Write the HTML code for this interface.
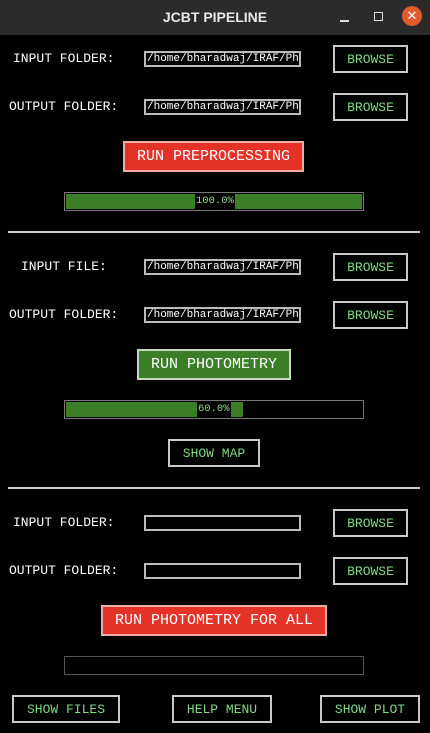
<!DOCTYPE html>
<html><head><meta charset="utf-8"><style>
*{margin:0;padding:0;box-sizing:border-box}
body{width:430px;height:733px;background:#000;position:relative;overflow:hidden;font-family:"Liberation Mono",monospace;color:#fff}
.a{position:absolute}
.tb{left:0;top:0;width:430px;height:35px;background:#2b2b2b}
.title{left:0;width:430px;top:9px;text-align:center;font:bold 14px "Liberation Sans",sans-serif;color:#e8e8e8}
.lbl{font-size:13px;line-height:14px;white-space:pre}
.ent{width:157px;height:16px;border:2px solid #bbb;font-size:11px;line-height:12px;color:#fff;overflow:hidden;white-space:nowrap;padding-left:1px}
.btn{border:2px solid #c8c8c8;color:#80d880;font-size:13px;display:flex;align-items:center;justify-content:center;background:#000}
.big{border:2px solid #e8b0a8;color:#fff;font-size:15px;display:flex;align-items:center;justify-content:center}
.red{background:#e53228}
.grn{background:#3a7e28;border-color:#c8d8c0}
.pb{left:64px;width:300px;height:19px;border:1px solid #777}
.fill{position:absolute;left:1px;top:1px;bottom:1px;background:#3a7e28}
.pt{position:absolute;top:1px;height:15px;background:#000;color:#8ee08e;font-size:10.5px;line-height:15px;padding:0 1px}
.sep{left:8px;width:412px;height:2px;background:#ccc}
</style></head><body>
<div class="a tb"></div>
<div class="a title">JCBT PIPELINE</div>
<div class="a" style="left:340px;top:20px;width:9px;height:1.5px;background:#ddd"></div>
<div class="a" style="left:374px;top:12px;width:9px;height:9px;border:1.5px solid #ddd"></div>
<div class="a" style="left:402px;top:6px;width:20px;height:20px;border-radius:50%;background:#e05a2b;color:#fff;font:13px 'Liberation Sans',sans-serif;text-align:center;line-height:20px">✕</div>

<div class="a lbl" style="left:13px;top:52px">INPUT FOLDER:</div>
<div class="a ent" style="left:144px;top:51px">/home/bharadwaj/IRAF/Photometry</div>
<div class="a btn" style="left:333px;top:45px;width:75px;height:28px">BROWSE</div>
<div class="a lbl" style="left:9px;top:100px">OUTPUT FOLDER:</div>
<div class="a ent" style="left:144px;top:99px">/home/bharadwaj/IRAF/Photometry</div>
<div class="a btn" style="left:333px;top:93px;width:75px;height:28px">BROWSE</div>
<div class="a big red" style="left:123px;top:141px;width:181px;height:31px">RUN PREPROCESSING</div>
<div class="a pb" style="top:192px"><div class="fill" style="right:1px"></div><div class="pt" style="left:130px">100.0%</div></div>
<div class="a sep" style="top:231px"></div>

<div class="a lbl" style="left:21px;top:260px">INPUT FILE:</div>
<div class="a ent" style="left:144px;top:259px">/home/bharadwaj/IRAF/Photometry</div>
<div class="a btn" style="left:333px;top:253px;width:75px;height:28px">BROWSE</div>
<div class="a lbl" style="left:9px;top:308px">OUTPUT FOLDER:</div>
<div class="a ent" style="left:144px;top:307px">/home/bharadwaj/IRAF/Photometry</div>
<div class="a btn" style="left:333px;top:301px;width:75px;height:28px">BROWSE</div>
<div class="a big grn" style="left:137px;top:349px;width:154px;height:31px">RUN PHOTOMETRY</div>
<div class="a pb" style="top:400px"><div class="fill" style="width:177px"></div><div class="pt" style="left:132px">60.0%</div></div>
<div class="a btn" style="left:168px;top:439px;width:92px;height:28px">SHOW MAP</div>
<div class="a sep" style="top:487px"></div>

<div class="a lbl" style="left:13px;top:516px">INPUT FOLDER:</div>
<div class="a ent" style="left:144px;top:515px"></div>
<div class="a btn" style="left:333px;top:509px;width:75px;height:28px">BROWSE</div>
<div class="a lbl" style="left:9px;top:564px">OUTPUT FOLDER:</div>
<div class="a ent" style="left:144px;top:563px"></div>
<div class="a btn" style="left:333px;top:557px;width:75px;height:28px">BROWSE</div>
<div class="a big red" style="left:101px;top:605px;width:226px;height:31px">RUN PHOTOMETRY FOR ALL</div>
<div class="a pb" style="top:656px;border-color:#555"></div>
<div class="a btn" style="left:12px;top:695px;width:108px;height:28px">SHOW FILES</div>
<div class="a btn" style="left:172px;top:695px;width:100px;height:28px">HELP MENU</div>
<div class="a btn" style="left:320px;top:695px;width:100px;height:28px">SHOW PLOT</div>
</body></html>
